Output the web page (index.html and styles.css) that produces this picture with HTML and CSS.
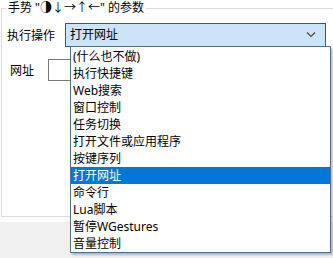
FILE: index.html
```html
<!DOCTYPE html>
<html lang="zh-CN">
<head>
    <meta charset="UTF-8">
    <title>手势参数</title>
    <link rel="stylesheet" href="styles.css">
</head>
<body>
    <div class="panel">
        <fieldset class="group">
            <legend>手势 "◑↓→↑←" 的参数</legend>
            <div class="row action-row">
                <span class="label">执行操作</span>
                <div class="combo">
                    <span class="combo-text">打开网址</span>
                    <svg class="chevron" width="10" height="6" viewBox="0 0 10 6">
                        <path d="M1 0.5 L5 4.5 L9 0.5" fill="none" stroke="#444" stroke-width="1.1"/>
                    </svg>
                </div>
            </div>
            <div class="row url-row">
                <span class="label">网址</span>
                <div class="textbox"></div>
            </div>
        </fieldset>
    </div>

    <ul class="dropdown">
        <li>(什么也不做)</li>
        <li>执行快捷键</li>
        <li>Web搜索</li>
        <li>窗口控制</li>
        <li>任务切换</li>
        <li>打开文件或应用程序</li>
        <li>按键序列</li>
        <li class="selected">打开网址</li>
        <li>命令行</li>
        <li>Lua脚本</li>
        <li>暂停WGestures</li>
        <li>音量控制</li>
    </ul>
</body>
</html>
```

FILE: styles.css
```css
body {
    margin: 0;
    width: 333px;
    height: 258px;
    overflow: hidden;
    background: #f0f0f0;
    font-family: "Noto Sans", "Noto Sans CJK SC", sans-serif;
    font-size: 12px;
    color: #000;
    position: relative;
}
.panel {
    background: #fff;
    height: 222px;
    padding-left: 1px;
    overflow: hidden;
}
.group {
    margin: 0;
    padding: 0;
    width: 332px;
    height: 217px;
    box-sizing: border-box;
    border: 1px solid #dcdcdc;
    border-right: none;
}
.group legend {
    margin-left: 4px;
    padding: 0 2px;
    line-height: 16px;
    height: 16px;
}
.row {
    display: flex;
    align-items: center;
}
.action-row {
    margin-top: 7px;
    height: 24px;
}
.action-row .label {
    width: 63px;
    padding-left: 5px;
    box-sizing: border-box;
    flex: none;
}
.combo {
    width: 261px;
    height: 24px;
    box-sizing: border-box;
    border: 1px solid #1f5f92;
    background: #cce4f7;
    display: flex;
    align-items: center;
    justify-content: space-between;
    padding: 0 9px 0 4px;
}
.combo-text {
    line-height: 16px;
}
.url-row {
    margin-top: 12px;
    height: 22px;
}
.url-row .label {
    width: 46px;
    padding-left: 8px;
    box-sizing: border-box;
    flex: none;
}
.textbox {
    width: 200px;
    height: 22px;
    box-sizing: border-box;
    border: 1px solid #7a7a7a;
    background: #fff;
}
.dropdown {
    position: absolute;
    left: 70px;
    top: 46px;
    width: 261px;
    margin: 0;
    padding: 1px 0 0;
    list-style: none;
    box-sizing: border-box;
    height: 207px;
    background: #fff;
    border: 1px solid #4d6f8f;
    box-shadow: 2px 2px 2px rgba(0, 0, 0, 0.25);
}
.dropdown li {
    height: 17px;
    line-height: 17px;
    padding-left: 2px;
    white-space: nowrap;
}
.dropdown li.selected {
    background: #0078d7;
    color: #fff;
}
```
